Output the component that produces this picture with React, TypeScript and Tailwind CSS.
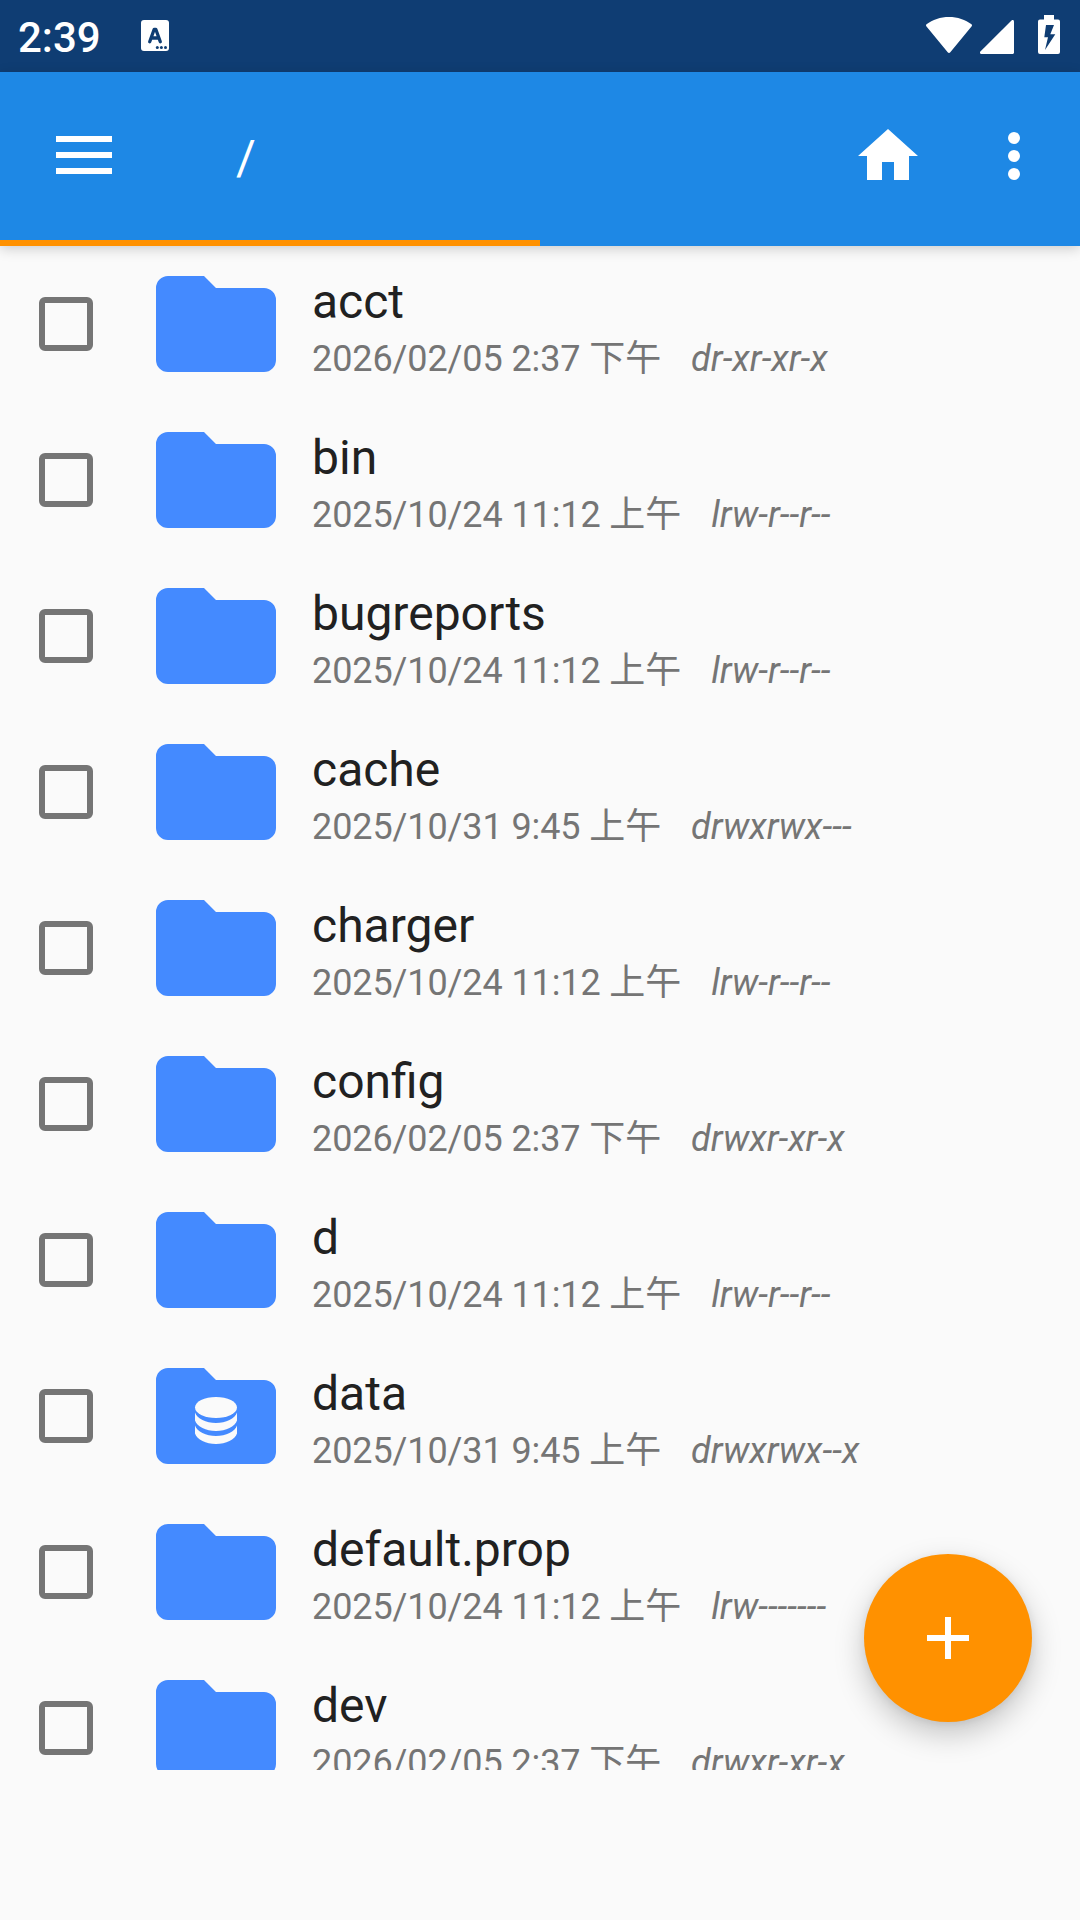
import React from 'react';

interface FileEntry {
  name: string;
  modified: string;
  mode: string;
  badge?: 'data';
}

const FILES: FileEntry[] = [
  { name: 'acct', modified: '2026/02/05 2:37 下午', mode: 'dr-xr-xr-x' },
  { name: 'bin', modified: '2025/10/24 11:12 上午', mode: 'lrw-r--r--' },
  { name: 'bugreports', modified: '2025/10/24 11:12 上午', mode: 'lrw-r--r--' },
  { name: 'cache', modified: '2025/10/31 9:45 上午', mode: 'drwxrwx---' },
  { name: 'charger', modified: '2025/10/24 11:12 上午', mode: 'lrw-r--r--' },
  { name: 'config', modified: '2026/02/05 2:37 下午', mode: 'drwxr-xr-x' },
  { name: 'd', modified: '2025/10/24 11:12 上午', mode: 'lrw-r--r--' },
  { name: 'data', modified: '2025/10/31 9:45 上午', mode: 'drwxrwx--x', badge: 'data' },
  { name: 'default.prop', modified: '2025/10/24 11:12 上午', mode: 'lrw-------' },
  { name: 'dev', modified: '2026/02/05 2:37 下午', mode: 'drwxr-xr-x' },
];

function StatusBar() {
  return (
    <div className="flex h-[72px] items-center justify-between bg-[#0f3d73] pl-[18px] pr-5 text-white">
      <div className="flex items-center">
        <span className="w-[123px] pt-[3px] text-[42px] leading-[49px] font-medium">2:39</span>
        <svg width="28" height="31" viewBox="0 0 28 31" className="mb-px">
          <rect width="28" height="31" rx="3" fill="currentColor" />
          <path
            d="M8.700 21.700 13.200 9.300h1.600L19.300 21.700M10.800 18h6.400"
            fill="none"
            stroke="#0f3d73"
            strokeWidth="3.3"
            strokeLinecap="round"
            strokeLinejoin="round"
          />
          <g fill="#0f3d73">
            <circle cx="16.3" cy="27.5" r="1.5" />
            <circle cx="20.4" cy="27.5" r="1.5" />
            <circle cx="24.5" cy="27.5" r="1.5" />
          </g>
        </svg>
      </div>
      <div className="mt-[15px] flex h-[39px] items-end self-start">
        <svg width="46" height="36" viewBox="0 0 46 36" className="mb-px" fill="currentColor">
          <path d="M.5 7.300C6.500 2.600 14.500 0 23 0s16.500 2.600 22.500 7.300c.6.500.7 1.300.2 1.900L24.300 35.300c-.7.900-1.900.9-2.600 0L.3 9.200C-.2 8.600-.1 7.800.5 7.300z" />
        </svg>
        <svg width="34" height="34" viewBox="0 0 34 34" className="ml-2" fill="currentColor">
          <path d="M34 1.200V32.500c0 .8-.7 1.500-1.500 1.500H1.200C0 34-.5 32.500.4 31.500L31.500.4c1-.9 2.500-.4 2.500.8z" />
        </svg>
        <svg width="22" height="39" viewBox="0 0 22 39" className="ml-6" fill="currentColor">
          <path
            fillRule="evenodd"
            d="M6 0h10v4.500h4a2 2 0 0 1 2 2V37a2 2 0 0 1-2 2H2a2 2 0 0 1-2-2V6.500a2 2 0 0 1 2-2h4zM8 10 6.300 22.300H10L7 35 17.300 19.300h-5L16 10z"
          />
        </svg>
      </div>
    </div>
  );
}

function Toolbar() {
  return (
    <header className="relative z-10 h-[174px] bg-[#1e88e5] text-white shadow-[0_3px_12px_rgba(0,0,0,0.18)]">
      <div className="flex h-[168px] items-center pr-[30px] pl-12">
        <button aria-label="menu">
          <svg width="72" height="72" viewBox="0 0 72 72" fill="currentColor">
            <path d="M8 16h56v6H8zM8 32h56v6H8zM8 48h56v6H8z" />
          </svg>
        </button>
        <span className="ml-[116px] pt-[3px] text-[48px] leading-[56px]">/</span>
        <button aria-label="home" className="ml-auto">
          <svg width="72" height="72" viewBox="0 0 24 24" fill="currentColor">
            <path d="M10 20v-6h4v6h5v-8h3L12 3 2 12h3v8z" />
          </svg>
        </button>
        <button aria-label="more" className="ml-[54px]">
          <svg width="72" height="72" viewBox="0 0 24 24" fill="currentColor">
            <circle cx="12" cy="6" r="2" />
            <circle cx="12" cy="12" r="2" />
            <circle cx="12" cy="18" r="2" />
          </svg>
        </button>
      </div>
      <div className="h-1.5 w-1/2 bg-[#ff9100]" />
    </header>
  );
}

function FolderIcon({ badge }: { badge?: 'data' }) {
  return (
    <svg width="120" height="96" viewBox="0 0 120 96" className="ml-[63px]">
      <path
        d="M12 0h36l12 12h48a12 12 0 0 1 12 12v60a12 12 0 0 1-12 12H12A12 12 0 0 1 0 84V12A12 12 0 0 1 12 0z"
        fill="#448aff"
      />
      {badge === 'data' && (
        <g fill="#fafafa">
          <ellipse cx="60" cy="39.500" rx="21" ry="10.500" />
          <path d="M39 44.500c2 6 11 10.500 21 10.500s19-4.500 21-10.500v8C79 58.500 70 63 60 63s-19-4.500-21-10.500z" />
          <path d="M39 57.500C41 63.500 50 68 60 68s19-4.500 21-10.500v8C79 71.500 70 76 60 76s-19-4.500-21-10.500z" />
        </g>
      )}
    </svg>
  );
}

function FileRow({ file }: { file: FileEntry }) {
  return (
    <li className="flex h-[156px] shrink-0 items-center pl-[39px]">
      <span role="checkbox" aria-checked="false" className="size-[54px] rounded-[6px] border-[6px] border-[#757575]" />
      <FolderIcon badge={file.badge} />
      <div className="ml-9 self-start pt-7 whitespace-nowrap">
        <div className="text-[48px] leading-[56px] text-[#212121]">{file.name}</div>
        <div className="mt-[3px] flex text-[36px] leading-[52px] text-[#757575]">
          <span className="tracking-[-0.1px]">{file.modified}</span>
          <span className="ml-[30px] tracking-[0.05px] italic">{file.mode}</span>
        </div>
      </div>
    </li>
  );
}

export default function App() {
  return (
    <div className="relative flex h-[1920px] w-[1080px] flex-col overflow-hidden bg-[#fafafa] font-[Roboto,'Noto_Sans_CJK_TC',sans-serif]">
      <StatusBar />
      <Toolbar />
      <ul className="flex h-[1524px] flex-col overflow-hidden">
        {FILES.map((file) => (
          <FileRow key={file.name} file={file} />
        ))}
      </ul>
      <button
        aria-label="add"
        className="absolute right-12 bottom-[198px] flex size-[168px] items-center justify-center rounded-full bg-[#ff9100] text-white shadow-[0_12px_30px_rgba(0,0,0,0.22),0_2px_8px_rgba(0,0,0,0.07)]"
      >
        <svg width="42" height="42" viewBox="0 0 42 42" fill="currentColor">
          <path d="M18 0h6v18h18v6H24v18h-6V24H0v-6h18z" />
        </svg>
      </button>
    </div>
  );
}
